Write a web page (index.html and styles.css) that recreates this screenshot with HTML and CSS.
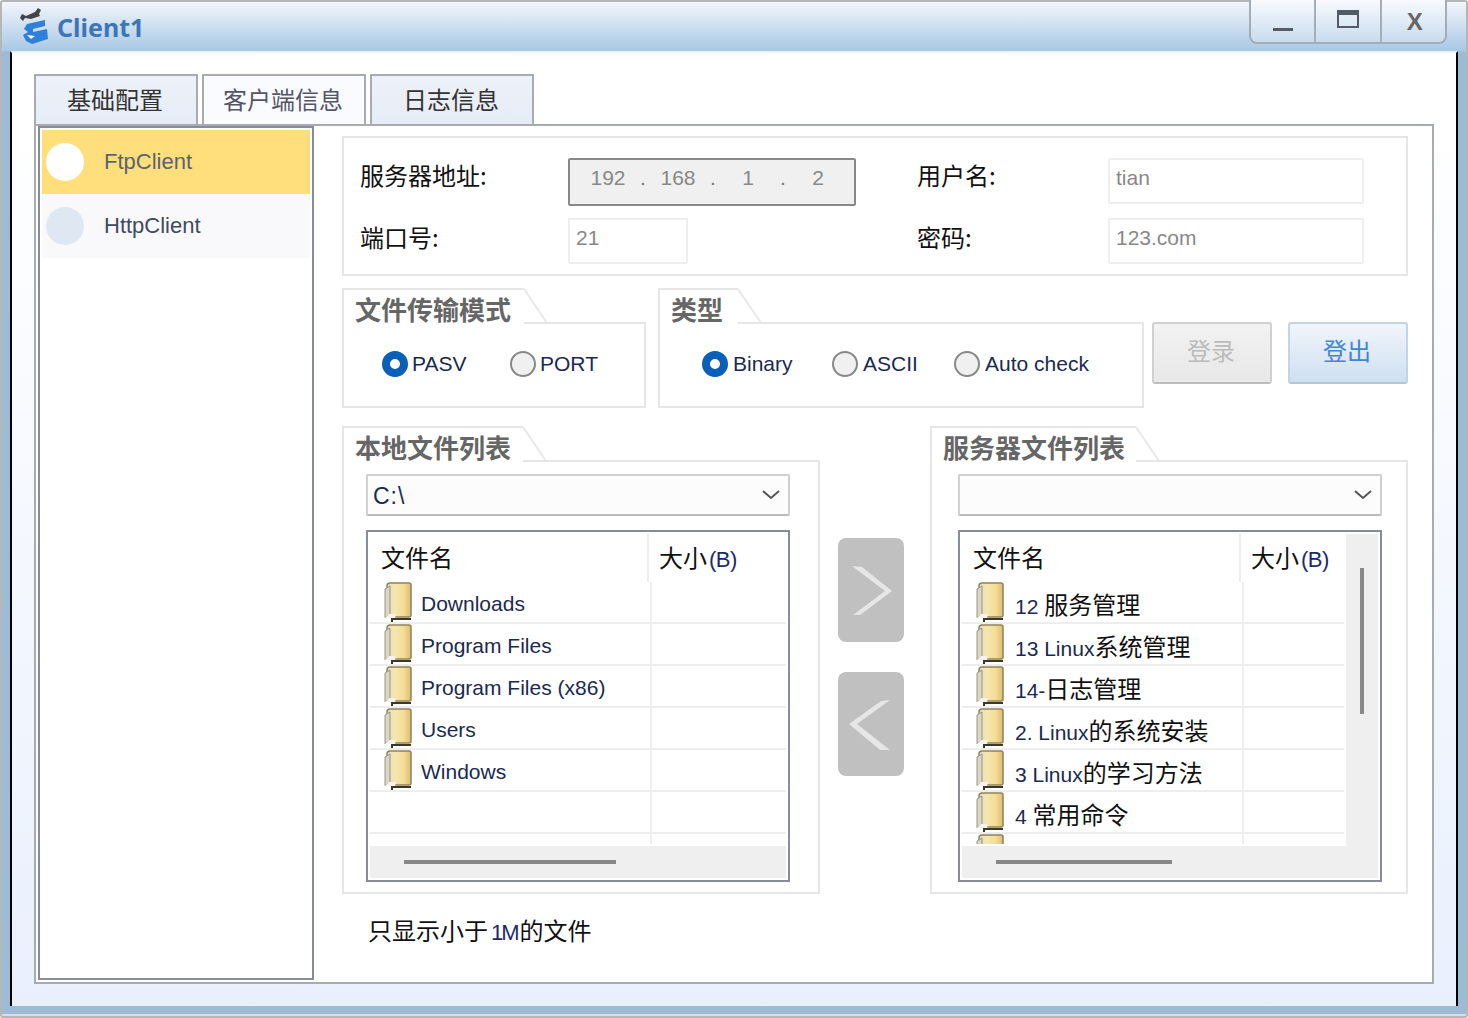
FILE: index.html
```html
<!DOCTYPE html>
<html lang="zh-CN">
<head>
<meta charset="utf-8">
<title>Client1</title>
<link rel="stylesheet" href="styles.css">
</head>
<body>
<svg class="defs" width="0" height="0" aria-hidden="true">
  <defs>
    <linearGradient id="fold" x1="0" x2="1" y1="0" y2="0">
      <stop offset="0" stop-color="#e4dcc4"/><stop offset=".3" stop-color="#f3e6b0"/><stop offset=".7" stop-color="#f4dd94"/><stop offset="1" stop-color="#dcbb70"/>
    </linearGradient>
    <symbol id="folder" viewBox="0 0 28 40">
      <path d="M3 4Q3 1 6 1H25Q27 1 27 3V33Q27 35 25 35H3Z" fill="url(#fold)" stroke="#8f8258" stroke-width="1.5"/>
      <path d="M1 7L6 4V32L1 36Z" fill="#d9d6c8" stroke="#9a9684"/>
      <path d="M1 36L5 32H12L11 36Z" fill="#f4f2ea"/>
      <path d="M7 36H27V38H9V40H7Z" fill="#3c3826"/>
    </symbol>
    <symbol id="notch" viewBox="0 0 22 36" preserveAspectRatio="none">
      <path d="M0 0L22 34H0Z" fill="#fff"/>
      <path d="M0 1L22 35" stroke="#e8e8e8" stroke-width="2" fill="none"/>
    </symbol>
  </defs>
</svg>
<div class="window">
  <div class="frame">
    <header class="titlebar">
      <svg class="app-icon" width="30" height="38" viewBox="0 0 30 38">
        <path d="M1 10L3 6L7 8L16 4L19 0L22 2L20 6L21 8L12 11L6 10L4 13Z" fill="#444"/>
        <path d="M8 16L26 12L26 18L14 21L14 24L28 21L29 31L13 36L7 33L4 27L9 24L5 21Z" fill="#2f80d8"/>
        <path d="M8 27L16 28L12 31Z" fill="#fff"/>
      </svg>
      <span class="title-text">Client1</span>
      <div class="win-buttons">
        <div class="win-btn"><span class="icon-min"></span></div>
        <div class="win-btn"><span class="icon-max"></span></div>
        <div class="win-btn"><span class="icon-close">X</span></div>
      </div>
    </header>
    <main class="client">
      <nav class="tabs">
        <div class="tab tab-a">基础配置</div>
        <div class="tab tab-b">客户端信息</div>
        <div class="tab tab-a">日志信息</div>
      </nav>
      <div class="pane">
        <aside class="sidebar">
          <div class="side-item side-on"><span class="dot dot-on"></span><span>FtpClient</span></div>
          <div class="side-item side-off"><span class="dot dot-off"></span><span class="side-dark">HttpClient</span></div>
        </aside>
        <section class="content">
          <div class="addr">
            <label class="lbl">服务器地址:</label>
            <div class="ip">
              <span class="oct">192</span><span class="ipdot">.</span><span class="oct">168</span><span class="ipdot">.</span><span class="oct">1</span><span class="ipdot">.</span><span class="oct">2</span>
            </div>
            <label class="lbl lbl-c4">用户名:</label>
            <div class="field">tian</div>
            <label class="lbl lbl2">端口号:</label>
            <div class="field field-port">21</div>
            <label class="lbl lbl2 lbl-c4">密码:</label>
            <div class="field">123.com</div>
          </div>

          <div class="row-mode">
            <div class="group g-mode">
              <div class="ghead"><h3 class="gtitle t-mode">文件传输模式</h3><svg class="notch"><use href="#notch"/></svg></div>
              <div class="gbody radios radios-mode">
                <div class="radio-item w-pasv"><span class="radio radio-on"></span><span>PASV</span></div>
                <div class="radio-item"><span class="radio"></span><span>PORT</span></div>
              </div>
            </div>
            <div class="group g-type">
              <div class="ghead"><h3 class="gtitle t-type">类型</h3><svg class="notch"><use href="#notch"/></svg></div>
              <div class="gbody radios radios-type">
                <div class="radio-item w-bin"><span class="radio radio-on"></span><span>Binary</span></div>
                <div class="radio-item w-asc"><span class="radio"></span><span>ASCII</span></div>
                <div class="radio-item"><span class="radio"></span><span>Auto check</span></div>
              </div>
            </div>
            <button class="btn btn-off">登录</button>
            <button class="btn btn-on">登出</button>
          </div>

          <div class="row-lists">
            <div class="group g-list">
              <div class="ghead"><h3 class="gtitle t-local">本地文件列表</h3><svg class="notch"><use href="#notch"/></svg></div>
              <div class="gbody lbody lbody-l">
                <div class="combo"><span class="combo-text">C:\</span><svg class="chev" width="18" height="10" viewBox="0 0 18 10"><path d="M1 1L9 8L17 1" fill="none" stroke="#555" stroke-width="2"/></svg></div>
                <div class="list">
                  <div class="list-main">
                    <div class="list-cols">
                      <div class="lhead"><div class="hname">文件名</div><div class="hsize">大小<span class="lat">(B)</span></div></div>
                      <div class="rows">
                        <div class="lrow"><div class="cname"><svg class="folder"><use href="#folder"/></svg><span>Downloads</span></div><div class="csize"></div></div>
                        <div class="lrow"><div class="cname"><svg class="folder"><use href="#folder"/></svg><span>Program Files</span></div><div class="csize"></div></div>
                        <div class="lrow"><div class="cname"><svg class="folder"><use href="#folder"/></svg><span>Program Files (x86)</span></div><div class="csize"></div></div>
                        <div class="lrow"><div class="cname"><svg class="folder"><use href="#folder"/></svg><span>Users</span></div><div class="csize"></div></div>
                        <div class="lrow"><div class="cname"><svg class="folder"><use href="#folder"/></svg><span>Windows</span></div><div class="csize"></div></div>
                        <div class="lrow"><div class="cname"></div><div class="csize"></div></div>
                        <div class="lrow"><div class="cname"></div><div class="csize"></div></div>
                      </div>
                    </div>
                  </div>
                  <div class="hscroll"><span class="hthumb hthumb-l"></span></div>
                </div>
              </div>
            </div>

            <div class="arrows">
              <button class="arrow"><svg width="66" height="104" viewBox="0 0 66 104"><path d="M14 28L24 29L54 53L22 77L15 77L47 53Z" fill="#e6e6e6"/></svg></button>
              <button class="arrow"><svg width="66" height="104" viewBox="0 0 66 104"><path d="M52 28L43 29L11 52L42 78L52 78L19 52Z" fill="#e6e6e6"/></svg></button>
            </div>

            <div class="group g-list">
              <div class="ghead"><h3 class="gtitle t-server">服务器文件列表</h3><svg class="notch"><use href="#notch"/></svg></div>
              <div class="gbody lbody lbody-r">
                <div class="combo"><span></span><svg class="chev" width="18" height="10" viewBox="0 0 18 10"><path d="M1 1L9 8L17 1" fill="none" stroke="#555" stroke-width="2"/></svg></div>
                <div class="list">
                  <div class="list-main">
                    <div class="list-cols list-cols-r">
                      <div class="lhead"><div class="hname">文件名</div><div class="hsize">大小<span class="lat">(B)</span></div></div>
                      <div class="rows">
                        <div class="lrow"><div class="cname"><svg class="folder"><use href="#folder"/></svg><span class="tx-r"><span class="tx-lat">12 </span>服务管理</span></div><div class="csize"></div></div>
                        <div class="lrow"><div class="cname"><svg class="folder"><use href="#folder"/></svg><span class="tx-r"><span class="tx-lat">13 Linux</span>系统管理</span></div><div class="csize"></div></div>
                        <div class="lrow"><div class="cname"><svg class="folder"><use href="#folder"/></svg><span class="tx-r"><span class="tx-lat">14-</span>日志管理</span></div><div class="csize"></div></div>
                        <div class="lrow"><div class="cname"><svg class="folder"><use href="#folder"/></svg><span class="tx-r"><span class="tx-lat">2. Linux</span>的系统安装</span></div><div class="csize"></div></div>
                        <div class="lrow"><div class="cname"><svg class="folder"><use href="#folder"/></svg><span class="tx-r"><span class="tx-lat">3 Linux</span>的学习方法</span></div><div class="csize"></div></div>
                        <div class="lrow"><div class="cname"><svg class="folder"><use href="#folder"/></svg><span class="tx-r"><span class="tx-lat">4 </span>常用命令</span></div><div class="csize"></div></div>
                        <div class="lrow"><div class="cname"><svg class="folder"><use href="#folder"/></svg></div><div class="csize"></div></div>
                      </div>
                    </div>
                    <div class="vscroll"><span class="vthumb"></span></div>
                  </div>
                  <div class="hscroll"><span class="hthumb hthumb-r"></span></div>
                </div>
              </div>
            </div>
          </div>

          <p class="caption">只显示小于<span class="lat lat-1m">1M</span>的文件</p>
        </section>
      </div>
    </main>
  </div>
</div>
</body>
</html>
```
FILE: styles.css
```css
* { box-sizing: border-box; }
html, body { margin: 0; padding: 0; }
body { width: 1468px; height: 1018px; overflow: hidden; background: #fff; font-family: "Liberation Sans", "Noto Sans CJK SC", sans-serif; color: #222; }
.defs { position: absolute; }
h3, p { margin: 0; }

.window { width: 1468px; height: 1018px; border: 2px solid #b4b6b8; border-radius: 3px; background: #ddd; }
.frame { height: 1012px; padding: 0 8px 8px; display: flex; flex-direction: column; background: linear-gradient(#f3f6fc 0, #a8c8e4 49px, #9cbbd6 50px, #9cbbd6 100%); }

.titlebar { height: 49px; flex: none; display: flex; align-items: flex-start; margin: 0 -8px; padding: 0 0 0 17px; position: relative; }
.app-icon { margin-top: 6px; flex: none; }
.title-text { margin: 5px 0 0 8px; font-size: 25px; line-height: 40px; font-weight: 700; color: #3d76b6; font-family: "Noto Sans", sans-serif; }
.win-buttons { position: absolute; top: -2px; left: 1247px; width: 198px; height: 44px; display: flex; border: 2px solid #a3adb8; border-top: 0; border-radius: 0 0 8px 8px; background: linear-gradient(#f8fafe, #c8dcef); }
.win-btn { flex: 1; display: flex; align-items: center; justify-content: center; border-left: 2px solid #a3adb8; position: relative; }
.win-btn:first-child { border-left: 0; }
.icon-min { width: 20px; height: 3px; background: #555a66; margin-top: 16px; }
.icon-max { width: 22px; height: 18px; border: 2px solid #555a66; border-top-width: 5px; margin-top: -4px; }
.icon-close { font: 700 24px/1 "Liberation Sans", sans-serif; color: #666; margin: 1px 0 0 3px; }

.client { flex: 1; min-height: 0; display: flex; flex-direction: column; border-left: 2px solid #000; border-right: 2px solid #000; border-top: 2px solid #eef2f8; padding: 21px 22px 22px; background: linear-gradient(#fff 0, #fff 60px, #e9f0fd 100%); }

.tabs { display: flex; gap: 4px; height: 50px; flex: none; }
.tab { width: 164px; display: flex; align-items: center; justify-content: center; padding: 0 2px 4px 0; border: 2px solid #a8acb0; border-bottom: 0; font-size: 24px; font-family: "Noto Sans CJK SC", sans-serif; }
.tab-a { background: linear-gradient(#edf1f9, #e6ecf6); color: #333; }
.tab-b { background: #f9fbfe; color: #556; }

.pane { flex: 1; min-height: 0; display: flex; border: 2px solid #a8acb0; background: #fff; padding: 0 24px 2px 2px; }

.sidebar { width: 276px; flex: none; border: 2px solid #888c98; padding: 2px; background: #fff; }
.side-item { height: 64px; display: flex; align-items: center; padding-left: 4px; font-size: 22px; color: #5a6470; }
.side-on { background: #ffdf7b; }
.side-off { background: #f9f9fb; }
.side-dark { color: #3f4a60; }
.dot { width: 38px; height: 38px; border-radius: 50%; margin-right: 20px; flex: none; }
.dot-on { background: #fff; }
.dot-off { background: #dfe8f2; }

.content { flex: 1; min-width: 0; margin-left: 28px; padding-top: 10px; display: flex; flex-direction: column; }

.addr { height: 140px; flex: none; display: grid; grid-template-columns: 208px 288px 61px 191px 256px; grid-template-rows: 48px 46px; row-gap: 12px; padding: 20px 0 0 16px; border: 2px solid #e6e6e6; }
.lbl { font-size: 24px; line-height: 34px; color: #111; font-family: "Noto Sans CJK SC", sans-serif; }
.lbl-c4 { grid-column: 4; }
.lbl2 { line-height: 37px; }
.ip { display: flex; align-items: center; padding: 0 0 8px 13px; border: 2px solid #888; border-radius: 2px; background: #f0f0f0; font-size: 21px; color: #888; }
.oct { width: 50px; text-align: center; }
.ipdot { width: 20px; text-align: center; color: #777; }
.field { height: 46px; padding: 0 6px 6px; display: flex; align-items: center; border: 2px solid #eee; border-radius: 2px; background: #fff; font-size: 21px; color: #888; }
.field-port { width: 120px; }

.row-mode { display: flex; height: 120px; margin-top: 12px; flex: none; }
.group { display: flex; flex-direction: column; }
.g-mode { width: 304px; }
.g-type { width: 486px; margin-left: 12px; }
.ghead { display: flex; height: 36px; margin-bottom: -2px; flex: none; position: relative; z-index: 1; }
.gtitle { height: 36px; padding: 1px 0 0 11px; border-left: 2px solid #e6e6e6; border-top: 2px solid #e6e6e6; background: #fff; font-size: 26px; line-height: 36px; font-weight: 700; color: #666; font-family: "Noto Sans CJK SC", sans-serif; white-space: nowrap; }
.t-mode { width: 182px; }
.t-type { width: 80px; }
.t-local { width: 181px; }
.t-server { width: 206px; }
.notch { display: block; flex: none; width: 23px; height: 36px; }
.gbody { flex: 1; min-height: 0; border: 2px solid #e6e6e6; background: #fff; }

.radios { display: flex; align-items: center; padding-bottom: 3px; font-size: 21px; color: #1a2a50; }
.radios-mode { padding-left: 38px; }
.radios-type { padding-left: 42px; }
.radio-item { display: flex; align-items: center; gap: 4px; }
.radios-type .radio-item { gap: 5px; }
.w-pasv { width: 128px; }
.w-bin { width: 130px; }
.w-asc { width: 122px; }
.radio { width: 26px; height: 26px; border-radius: 50%; border: 2px solid #888; background: #f0f0f0; flex: none; }
.radio-on { border: 8px solid #0a60b8; background: #fff; }

.btn { width: 120px; height: 62px; margin: 34px 0 0; padding: 0 2px 8px 0; font-size: 24px; font-family: "Noto Sans CJK SC", sans-serif; border-radius: 3px; }
.btn-off { margin-left: 8px; border: 2px solid #d0d0d0; border-bottom-color: #bdbdbd; background: linear-gradient(#f2f2f2, #e8e8e8); color: #bbb; }
.btn-on { margin-left: 16px; border: 2px solid #c4d4e4; border-bottom-color: #b4c6d8; background: linear-gradient(#f0f5fb, #cfe0f1); color: #3f86d4; }

.row-lists { display: flex; height: 468px; margin-top: 18px; flex: none; }
.g-list { width: 478px; flex: none; }
.lbody { padding-top: 12px; display: flex; flex-direction: column; gap: 14px; }
.lbody-l { padding-left: 22px; padding-right: 28px; }
.lbody-r { padding-left: 26px; padding-right: 24px; }
.combo { height: 42px; flex: none; display: flex; align-items: center; justify-content: space-between; padding: 0 8px 0 5px; border: 2px solid #d0d0d0; border-bottom-color: #bcbcbc; border-radius: 2px; background: #fcfcfc; font-size: 23px; letter-spacing: 1px; color: #1a2a50; }
.combo-text { padding-top: 2px; }
.chev { display: block; }

.list { height: 352px; flex: none; display: flex; flex-direction: column; padding: 2px; border: 2px solid #888c98; background: #fff; }
.list-main { flex: 1; min-height: 0; display: flex; gap: 2px; }
.list-cols { flex: 1; min-width: 0; display: flex; flex-direction: column; }
.lhead { height: 48px; flex: none; display: flex; font-size: 24px; color: #111; font-family: "Noto Sans CJK SC", sans-serif; }
.hname { width: 279px; flex: none; padding: 6px 0 0 11px; line-height: 34px; border-right: 2px solid #eee; }
.hsize { padding: 6px 0 0 10px; line-height: 34px; white-space: nowrap; }
.lat { font-family: "Liberation Sans", sans-serif; font-size: 22px; letter-spacing: -0.5px; margin-left: 2px; color: #1a2a70; }
.lat-1m { font-size: 22px; letter-spacing: -2px; margin: 0 2px 0 3px; }
.rows { flex: 1; min-height: 0; overflow: hidden; margin-bottom: 2px; }
.lrow { height: 42px; display: flex; border-bottom: 2px solid #eee; }
.cname { width: 280px; flex: none; display: flex; align-items: flex-start; padding-left: 14px; gap: 9px; font-size: 21px; color: #1a2a50; overflow: hidden; white-space: nowrap; }
.cname > span { line-height: 44px; }
.tx-r { color: #111; font-size: 24px; font-family: "Noto Sans CJK SC", sans-serif; margin-left: 2px; }
.tx-lat { font-family: "Liberation Sans", sans-serif; font-size: 21px; color: #1a2a50; }
.csize { flex: 1; border-left: 2px solid #eee; }
.folder { width: 28px; height: 40px; flex: none; display: block; }
.hscroll { height: 32px; flex: none; background: #efefef; display: flex; align-items: center; }
.hthumb { height: 4px; background: #888; margin-left: 34px; }
.hthumb-l { width: 212px; }
.hthumb-r { width: 176px; }
.vscroll { width: 32px; flex: none; background: #efefef; padding: 34px 14px 0; }
.vthumb { display: block; width: 4px; height: 146px; background: #888; }

.arrows { width: 110px; flex: none; padding: 112px 26px 0 18px; display: flex; flex-direction: column; gap: 30px; }
.arrow { width: 66px; height: 104px; padding: 0; border: 0; border-radius: 8px; background: #c0c0c0; }
.arrow svg { display: block; }

.caption { margin: 18px 0 0 26px; font-size: 24px; line-height: 36px; color: #111; font-family: "Noto Sans CJK SC", sans-serif; }
```
